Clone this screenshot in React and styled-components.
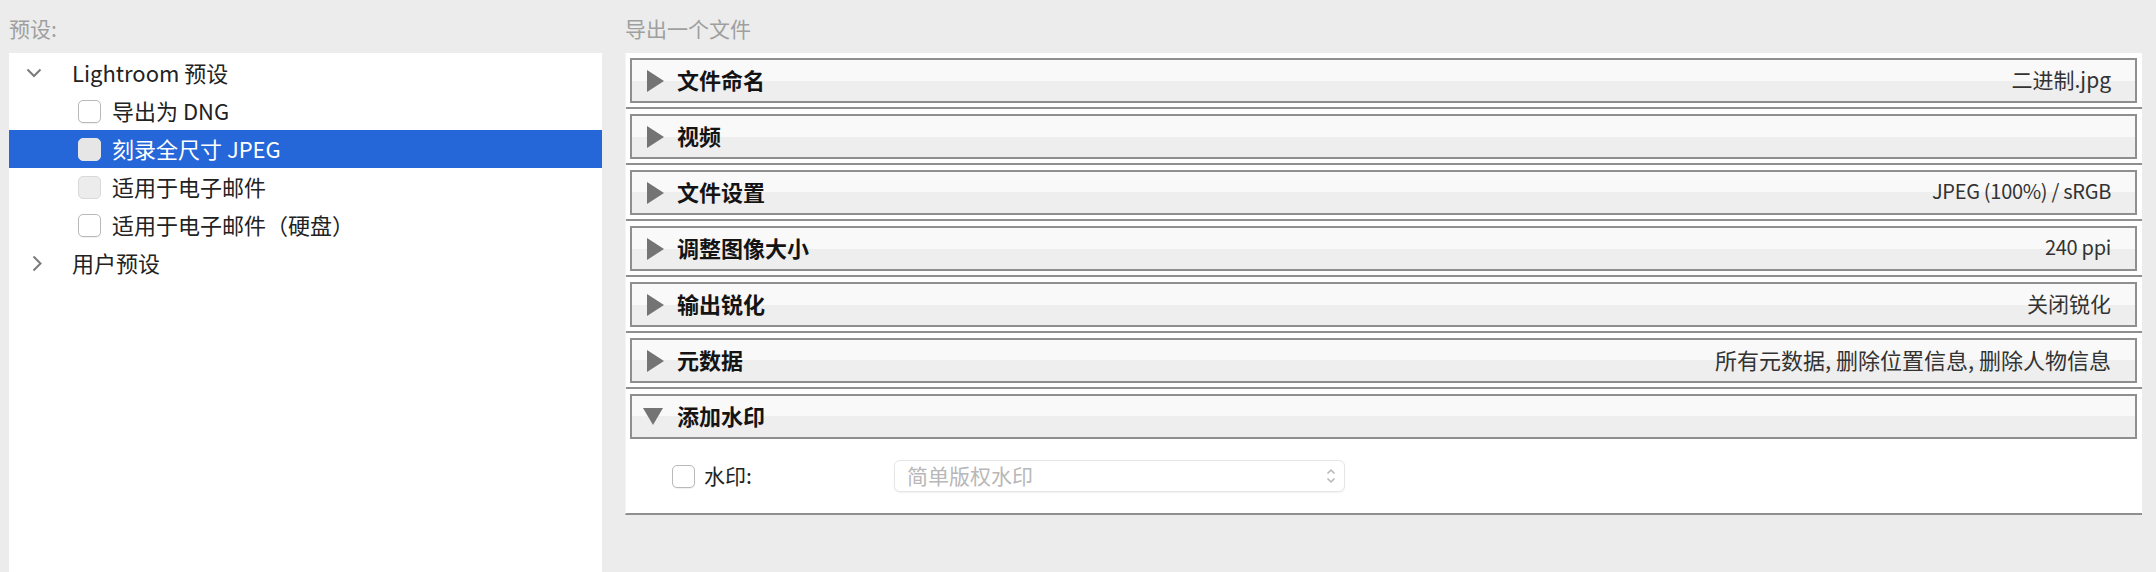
import styled, { createGlobalStyle } from "styled-components";

const GlobalStyle = createGlobalStyle`
  html, body {
    margin: 0;
    padding: 0;
    background: #ececec;
  }
  body {
    font-family: "Noto Sans CJK SC", "Noto Sans", sans-serif;
    color: #222;
  }
`;

const Page = styled.div`
  display: flex;
  height: 572px;
  padding: 0 14px 0 9px;
  gap: 23px;
  box-sizing: border-box;
  overflow: hidden;
`;

const LeftColumn = styled.div`
  width: 593px;
  display: flex;
  flex-direction: column;
`;

const RightColumn = styled.div`
  flex: 1;
  display: flex;
  flex-direction: column;
`;

const PaneLabel = styled.div`
  height: 53px;
  box-sizing: border-box;
  padding-top: 2px;
  display: flex;
  align-items: center;
  font-size: 21px;
  color: #9f9f9f;
`;

const TreePanel = styled.div`
  flex: 1;
  background: #fff;
  padding-top: 1px;
`;

const Row = styled.div`
  height: 38px;
  display: flex;
  align-items: center;
  box-sizing: border-box;
  padding-left: ${(p) => (p.$group ? "17px" : "69px")};
  background: ${(p) => (p.$selected ? "#2566d8" : "transparent")};
  color: ${(p) => (p.$selected ? "#fff" : "#222")};
  font-size: 22px;
  white-space: nowrap;
`;

const RowText = styled.span`
  padding-bottom: 3px;
`;

const Toggle = styled.span`
  width: 46px;
  display: flex;
  align-items: center;
  padding-left: ${(p) => (p.$open ? "0" : "6px")};
  box-sizing: border-box;
`;

const Box = styled.span`
  width: 23px;
  height: 23px;
  box-sizing: border-box;
  border-radius: 5px;
  margin-right: 11px;
  flex: none;
  background: ${(p) =>
    p.$variant === "selected" ? "#e6e6e6" : p.$variant === "disabled" ? "#ececec" : "#fff"};
  border: 1px solid
    ${(p) =>
      p.$variant === "selected" ? "#e6e6e6" : p.$variant === "disabled" ? "#d9d9d9" : "#b9b9b9"};
  box-shadow: ${(p) => (p.$variant === "normal" ? "0 1px 1px rgba(0,0,0,0.06)" : "none")};
`;

const ExportPanel = styled.div`
  background: #fff;
  padding-top: 5px;
  border-bottom: 2px solid #8f8f8f;
  border-left: 1px solid #f4f4f4;
`;

const SectionHeader = styled.div`
  height: 45px;
  box-sizing: border-box;
  margin: 0 5px 0 4px;
  border: 2px solid #8f8f8f;
  background: linear-gradient(#f9f9f9 50%, #eeeeee 50%);
  display: flex;
  align-items: center;
  padding: 0 24px 0 ${(p) => (p.$open ? "11px" : "15px")};
`;

const Separator = styled.div`
  height: 2px;
  background: #8f8f8f;
  margin: 4px 0 5px;
`;

const SectionTitle = styled.span`
  font-size: 22px;
  font-weight: 700;
  color: #141414;
  padding-bottom: 4px;
  margin-left: ${(p) => (p.$open ? "14px" : "13px")};
`;

const Summary = styled.span`
  margin-left: auto;
  padding-bottom: 4px;
  font-size: ${(p) => p.$size || 21}px;
  letter-spacing: ${(p) => (p.$size === 20 ? "-0.3px" : "0")};
  color: #333;
  white-space: nowrap;
`;

const WatermarkBody = styled.div`
  height: 74px;
  display: flex;
  align-items: center;
  padding-left: 46px;
`;

const CheckLabel = styled.span`
  font-size: 21px;
  color: #222;
  margin-left: -2px;
  padding-bottom: 3px;
  width: 190px;
`;

const Select = styled.div`
  width: 451px;
  height: 32px;
  box-sizing: border-box;
  border: 1px solid #e6e6e6;
  border-radius: 6px;
  box-shadow: 0 1px 2px rgba(0, 0, 0, 0.06);
  display: flex;
  align-items: center;
  padding: 0 8px 0 12px;
  font-size: 21px;
  color: #b8b8b8;
  background: #fff;
`;

const SelectText = styled.span`
  padding-bottom: 3px;
`;

const SelectArrows = styled.svg`
  margin-left: auto;
`;

const ChevronDown = () => (
  <svg width="16" height="10" viewBox="0 0 16 10">
    <path d="M1.5 1.5 L8 8 L14.5 1.5" fill="none" stroke="#7b7b7b" strokeWidth="2" />
  </svg>
);

const ChevronRight = () => (
  <svg width="10" height="17" viewBox="0 0 10 17">
    <path d="M1.5 1.5 L8.5 8.5 L1.5 15.5" fill="none" stroke="#7b7b7b" strokeWidth="2" />
  </svg>
);

const Triangle = ({ open }) =>
  open ? (
    <svg width="20" height="17" viewBox="0 0 20 17">
      <path d="M0 0 L20 0 L10 17 Z" fill="#747474" />
    </svg>
  ) : (
    <svg width="17" height="22" viewBox="0 0 17 22">
      <path d="M0 0 L17 11 L0 22 Z" fill="#747474" />
    </svg>
  );

const presets = [
  { label: "导出为 DNG", variant: "normal" },
  { label: "刻录全尺寸 JPEG", variant: "selected" },
  { label: "适用于电子邮件", variant: "disabled" },
  { label: "适用于电子邮件（硬盘）", variant: "normal" },
];

const sections = [
  { title: "文件命名", summary: "二进制.jpg" },
  { title: "视频", summary: "" },
  { title: "文件设置", summary: "JPEG (100%) / sRGB", size: 20 },
  { title: "调整图像大小", summary: "240 ppi", size: 20 },
  { title: "输出锐化", summary: "关闭锐化" },
  { title: "元数据", summary: "所有元数据, 删除位置信息, 删除人物信息", size: 22 },
];

const App = () => {
  return (
    <>
      <GlobalStyle />
      <Page>
        <LeftColumn>
          <PaneLabel>预设:</PaneLabel>
          <TreePanel>
            <Row $group>
              <Toggle $open>
                <ChevronDown />
              </Toggle>
              <RowText>Lightroom 预设</RowText>
            </Row>
            {presets.map((p) => (
              <Row key={p.label} $selected={p.variant === "selected"}>
                <Box $variant={p.variant} />
                <RowText>{p.label}</RowText>
              </Row>
            ))}
            <Row $group>
              <Toggle>
                <ChevronRight />
              </Toggle>
              <RowText>用户预设</RowText>
            </Row>
          </TreePanel>
        </LeftColumn>

        <RightColumn>
          <PaneLabel>导出一个文件</PaneLabel>
          <ExportPanel>
            {sections.map((s) => (
              <div key={s.title}>
                <SectionHeader>
                  <Triangle />
                  <SectionTitle>{s.title}</SectionTitle>
                  {s.summary && <Summary $size={s.size}>{s.summary}</Summary>}
                </SectionHeader>
                <Separator />
              </div>
            ))}
            <SectionHeader $open>
              <Triangle open />
              <SectionTitle $open>添加水印</SectionTitle>
            </SectionHeader>
            <WatermarkBody>
              <Box $variant="normal" />
              <CheckLabel>水印:</CheckLabel>
              <Select>
                <SelectText>简单版权水印</SelectText>
                <SelectArrows width="10" height="16" viewBox="0 0 10 16">
                  <path d="M1.5 5.5 L5 2 L8.5 5.5 M1.5 10.5 L5 14 L8.5 10.5" fill="none" stroke="#b5b5b5" strokeWidth="1.5" />
                </SelectArrows>
              </Select>
            </WatermarkBody>
          </ExportPanel>
        </RightColumn>
      </Page>
    </>
  );
};

export default App;
